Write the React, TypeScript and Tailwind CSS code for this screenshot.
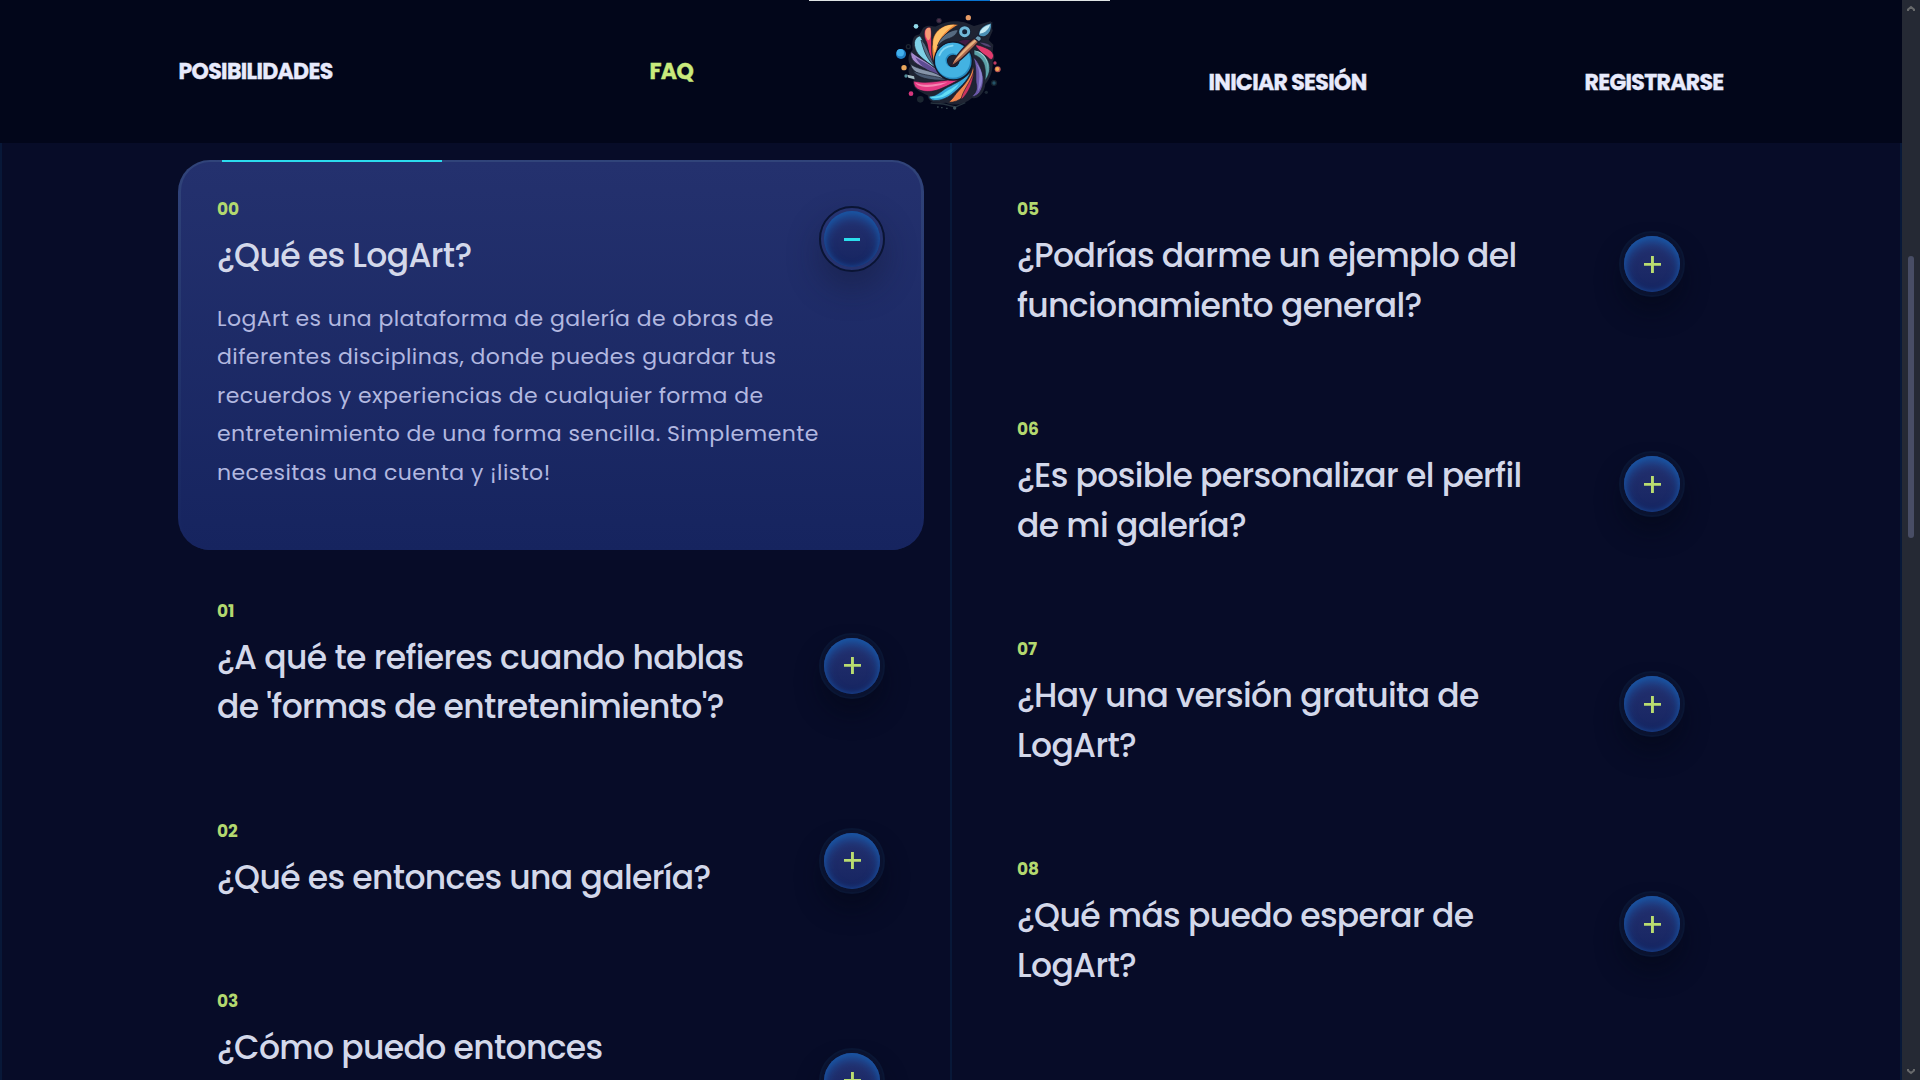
type Item = { id: string; title: string[]; body?: string[]; height: string };

const left: Item[] = [
  {
    id: "00",
    height: "h-[389.5px]",
    title: ["¿Qué es LogArt?"],
    body: [
      "LogArt es una plataforma de galería de obras de",
      "diferentes disciplinas, donde puedes guardar tus",
      "recuerdos y experiencias de cualquier forma de",
      "entretenimiento de una forma sencilla. Simplemente",
      "necesitas una cuenta y ¡listo!",
    ],
  },
  { id: "01", height: "h-[208px]", title: ["¿A qué te refieres cuando hablas", "de 'formas de entretenimiento'?"] },
  { id: "02", height: "h-[158px]", title: ["¿Qué es entonces una galería?"] },
  { id: "03", height: "h-[258px]", title: ["¿Cómo puedo entonces"] },
];

const right: Item[] = [
  { id: "05", height: "h-[208px]", title: ["¿Podrías darme un ejemplo del", "funcionamiento general?"] },
  { id: "06", height: "h-[208px]", title: ["¿Es posible personalizar el perfil", "de mi galería?"] },
  { id: "07", height: "h-[208px]", title: ["¿Hay una versión gratuita de", "LogArt?"] },
  { id: "08", height: "h-[208px]", title: ["¿Qué más puedo esperar de", "LogArt?"] },
];

function Toggle({ open }: { open?: boolean }) {
  return (
    <div
      className={
        open
          ? "flex size-[66px] shrink-0 items-center justify-center rounded-full border-2 border-[#0a1434] bg-[#263370] shadow-[0_16px_32px_rgba(20,24,50,0.42)]"
          : "flex size-[66px] shrink-0 items-center justify-center rounded-full border-2 border-[#0a1634] bg-[#0a122f] shadow-[0_16px_22px_rgba(4,8,24,0.5)]"
      }
    >
      <div className="flex size-14 items-center justify-center rounded-full bg-linear-to-b from-[#253170] to-[#162561] shadow-[inset_0_5px_11px_#1959a8,inset_0_0_5px_#18428e]">
        {open ? (
          <div className="h-[3px] w-4 bg-[#2bdeed]" />
        ) : (
          <svg viewBox="0 0 17 17" className="size-[17px]" fill="#b9dc70">
            <path d="M0 7h17v2.7H0zM7 0h2.9v17H7z" />
          </svg>
        )}
      </div>
    </div>
  );
}

function FaqItem({ item }: { item: Item }) {
  const open = !!item.body;
  return (
    <div
      className={`relative flex shrink-0 justify-between pr-[39px] pl-[39px] ${item.height} ${open ? "" : "items-center"}`}
    >
      {open && (
        <>
          <div className="absolute inset-0 rounded-[32px] bg-linear-to-b from-[#31447a] to-[#16245f]" />
          <div className="absolute inset-x-[3px] top-[2px] bottom-0 rounded-[29px] bg-linear-to-b from-[#24316e] to-[#16245f]" />
          <div className="absolute top-0 left-11 h-[2px] w-[220px] bg-[#2bdcee]" />
        </>
      )}
      <div className="relative self-start pt-[37px] whitespace-nowrap">
        <div className="text-[17px] leading-6 font-bold text-[#b3d86f]">{item.id}</div>
        <h3 className="mt-[10.4px] text-[33px] leading-[49.5px] font-medium tracking-[-0.02em] text-[#d3d8ea]">
          {item.title.map((line) => (
            <span key={line} className="block">
              {line}
            </span>
          ))}
        </h3>
        {item.body && (
          <p className="mt-[19px] text-[22px] leading-[38.5px] tracking-[0.02em] text-[#b2b8e0]">
            {item.body.map((line) => (
              <span key={line} className="block">
                {line}
              </span>
            ))}
          </p>
        )}
      </div>
      <div className={open ? "relative pt-[46px]" : "relative"}>
        <Toggle open={open} />
      </div>
    </div>
  );
}

function Logo() {
  return (
    <svg viewBox="0 0 540 390" className="h-[130px] w-[180px] shrink-0">
      <path
        d="M192 82 C212 70 222 84 230 78 C258 62 290 60 318 68 L342 78 L392 64 L398 92 L386 120 L400 134 L398 160 Q408 172 398 184 C400 214 388 240 376 252 C374 280 352 300 336 294 C312 316 276 318 258 308 C226 312 204 306 203 286 C180 274 154 266 162 242 C140 222 144 204 152 198 C140 178 146 160 158 150 C154 120 160 106 174 104 C182 106 184 88 192 82 Z"
        fill="#1f2433"
      />
      <g stroke="#171c2a" strokeWidth="2" strokeLinejoin="round">
        <path d="M296 74 C250 66 216 96 217 132 C213 154 218 175 223 190 C230 130 250 98 296 74Z" fill="#f08a3c" />
        <path d="M284 74 C250 72 222 96 220 125 C218 145 222 150 225 160 C232 120 254 92 284 74Z" fill="#ffc066" stroke="none" />
        <path d="M212 82 C191 78 187 105 200 127 C206 145 204 170 219 189 C211 150 218 118 212 82Z" fill="#e73668" />
        <path d="M211 84 C195 78 190 102 203 120 C211 124 215 104 211 84Z" fill="#f69a76" stroke="none" />
        <path d="M174 110 C156 120 162 151 180 168 C194 181 208 192 230 206 C206 176 196 137 184 113Q179 105 174 110Z" fill="#7fd0e6" />
        <path d="M183 120 C191 150 198 176 228 203 C210 175 204 142 190 126Z" fill="#536b83" />
        <path d="M153 155 C148 180 172 196 201 206 C220 212 234 222 248 228 C214 188 180 178 153 155Z" fill="#a489cc" />
        <path d="M166 172 C190 186 216 197 248 228 C216 220 180 202 166 172Z" fill="#5d4c91" stroke="none" />
        <path d="M152 193 C156 220 194 234 254 238 C228 210 180 213 152 193Z" fill="#8795aa" />
        <path d="M158 212 C170 232 204 243 262 240 C230 226 190 228 158 212Z" fill="#4b5b74" />
        <path d="M161 243 C158 278 211 280 240 267 C268 256 286 245 300 238 C246 238 208 254 161 243Z" fill="#e63a83" />
        <path d="M166 248 C194 260 230 252 262 247 C236 262 180 268 166 248Z" fill="#f487b2" stroke="none" />
        <path d="M206 290 C214 310 250 302 274 284 C296 267 324 242 332 216 C304 246 277 252 254 267 C239 279 221 291 206 290Z" fill="#36a9dc" />
        <path d="M208 290 C232 288 242 290 253 278 C267 269 282 263 298 250 C279 280 240 305 208 290Z" fill="#63def5" stroke="none" />
        <path d="M266 307 C300 308 322 282 333 251 C341 230 344 211 339 200 C331 240 305 261 289 280 C281 291 275 299 266 307Z" fill="#f1844d" />
        <path d="M303 300 C328 278 339 246 342 212 C331 250 306 273 303 300Z" fill="#cb345e" />
        <path d="M334 290 C362 291 375 252 368 224 C361 199 352 180 340 172 C353 210 344 235 350 257 C351 272 345 282 334 290Z" fill="#6b58a8" />
        <path d="M348 190 C364 216 357 242 354 274 C373 248 371 211 348 190Z" fill="#8c82cd" stroke="none" />
        <path d="M342 164 C370 174 380 196 375 242 C401 208 392 166 342 149Z" fill="#5ba1a8" />
        <path d="M344 152 C371 162 388 182 382 218 C390 184 374 153 344 152Z" fill="#9bcbd0" stroke="none" />
        <path d="M342 132 C357 150 361 157 382 170 Q396 188 401 168 C399 150 378 144 363 138Z" fill="#e23b6e" />
        <path d="M356 126 C374 127 391 131 395 143 C381 141 368 137 356 126Z" fill="#554675" />
        <path d="M232 138 C244 105 270 90 294 89 C291 103 280 112 262 117 C250 122 242 128 232 138Z" fill="#566a80" />
        <path d="M294 125 C315 113 334 120 344 125 L326 144Z" fill="#411c45" />
      </g>
      <circle cx="280" cy="183" r="38" fill="none" stroke="#121728" strokeWidth="42" />
      <circle cx="280" cy="183" r="37" fill="none" stroke="#2587bd" strokeWidth="36" />
      <circle cx="278" cy="181" r="37" fill="none" stroke="#43b2e2" strokeWidth="31" />
      <path d="M238 166 Q248 140 278 137" fill="none" stroke="#83d8f4" strokeWidth="5" strokeLinecap="round" />
      <circle cx="314" cy="95" r="13" fill="#132238" stroke="#182436" strokeWidth="13" />
      <circle cx="314" cy="95" r="12" fill="none" stroke="#70b8d8" strokeWidth="9" />
      <path d="M274 198 C280 172 326 124 347 112 L358 124 C339 144 300 187 274 198Z" fill="#a9674f" stroke="#251d29" strokeWidth="4" />
      <path d="M280 188 C294 164 325 133 348 116 L353 120 C330 140 298 174 280 188Z" fill="#e6b17e" />
      <path d="M343 115 L353 106 Q365 107 364 119 L357 126Z" fill="#6b9db4" stroke="#192132" strokeWidth="4" />
      <path d="M355 106 Q355 77 395 68 Q398 98 377 109 Q367 114 355 106Z" fill="#4a8fb4" stroke="#192132" strokeWidth="4" />
      <path d="M359 101 Q361 82 391 73 Q386 91 370 98Z" fill="#c4eaf4" />
      <circle cx="123" cy="162" r="15" fill="#207fc5" />
      <circle cx="121" cy="158" r="11" fill="#43b1ed" />
      <circle cx="168" cy="79" r="7" fill="#91d9e9" />
      <circle cx="237" cy="62" r="7" fill="#4c314e" stroke="#292636" strokeWidth="3" />
      <circle cx="325" cy="53" r="8" fill="#e69b66" />
      <circle cx="132" cy="203" r="8" fill="#e9a65c" />
      <circle cx="153" cy="281" r="7" fill="#d6367c" />
      <circle cx="181" cy="298" r="10" fill="#1b2631" />
      <circle cx="405" cy="189" r="5" fill="#c23a63" />
      <circle cx="413" cy="208" r="9" fill="#b85352" />
      <circle cx="412" cy="207" r="6" fill="#f5ae54" />
      <circle cx="402" cy="249" r="7" fill="#245369" stroke="#16232f" strokeWidth="4" />
      <circle cx="379" cy="277" r="5" fill="#1c2735" />
      <circle cx="145" cy="140" r="6" fill="none" stroke="#1c2430" strokeWidth="4" />
      <circle cx="138" cy="228" r="5" fill="#558f9c" />
      <path d="M142 224 L162 229 L164 238 L145 233Z" fill="#a5bec5" />
      <path d="M212 309 L250 312 L286 321 L316 308" fill="none" stroke="#26323e" strokeWidth="4" />
      <circle cx="284" cy="324" r="5" fill="#40545d" />
      <path d="M231 321h5M243 323h5M258 325h5" stroke="#33424c" strokeWidth="4" />
    </svg>
  );
}

export default function App() {
  return (
    <div className="flex h-[1080px] w-[1920px] overflow-hidden bg-[#070c28] font-['Poppins','Inter',sans-serif]">
      <div className="relative flex w-[1902px] shrink-0 flex-col">
        <header className="flex h-[143px] shrink-0 items-start bg-[#02061a] pl-[178px] text-[22px] leading-8 font-bold tracking-[-0.03em] whitespace-nowrap text-[#e8eafc] [-webkit-text-stroke:0.35px_currentColor]">
          <nav className="flex w-[682px] pt-14 pl-[0.5px]">
            <a className="w-[471px]">POSIBILIDADES</a>
            <a className="text-[#c9ea7c]">FAQ</a>
          </nav>
          <Logo />
          <nav className="flex pt-[67px] pl-[168.5px]">
            <a className="w-[376px]">INICIAR SESIÓN</a>
            <a>REGISTRARSE</a>
          </nav>
        </header>
        <div className="absolute top-0 left-[809px] flex h-px w-[301px] justify-center bg-[#dfe3e4]">
          <div className="h-px w-[60px] bg-[#0873d1]" />
        </div>
        <main className="flex h-[937px] justify-between overflow-hidden border-x-2 border-[#081838]">
          <section className="flex w-[950px] shrink-0 flex-col gap-3 border-r-2 border-[#081838] pt-[17px] pr-[26px] pl-[176px]">
            {left.map((item) => (
              <FaqItem key={item.id} item={item} />
            ))}
          </section>
          <section className="flex w-[948px] shrink-0 flex-col gap-3 pt-[17px] pr-[176px] pl-[26px]">
            {right.map((item) => (
              <FaqItem key={item.id} item={item} />
            ))}
          </section>
        </main>
      </div>
      <div className="flex w-[18px] shrink-0 flex-col items-center justify-between bg-[#252934] py-[5px]">
        <svg viewBox="0 0 8 7" className="h-[7px] w-2" fill="none" stroke="#686a6c" strokeWidth="2">
          <path d="M1 6V4.5L4 2l3 2.5V6" />
        </svg>
        <div className="mt-[244px] mb-auto h-[282px] w-[6px] rounded-full bg-[#484d65]" />
        <svg viewBox="0 0 8 7" className="h-[7px] w-2" fill="none" stroke="#686a6c" strokeWidth="2">
          <path d="M1 1v1.5L4 5l3-2.5V1" />
        </svg>
      </div>
    </div>
  );
}
